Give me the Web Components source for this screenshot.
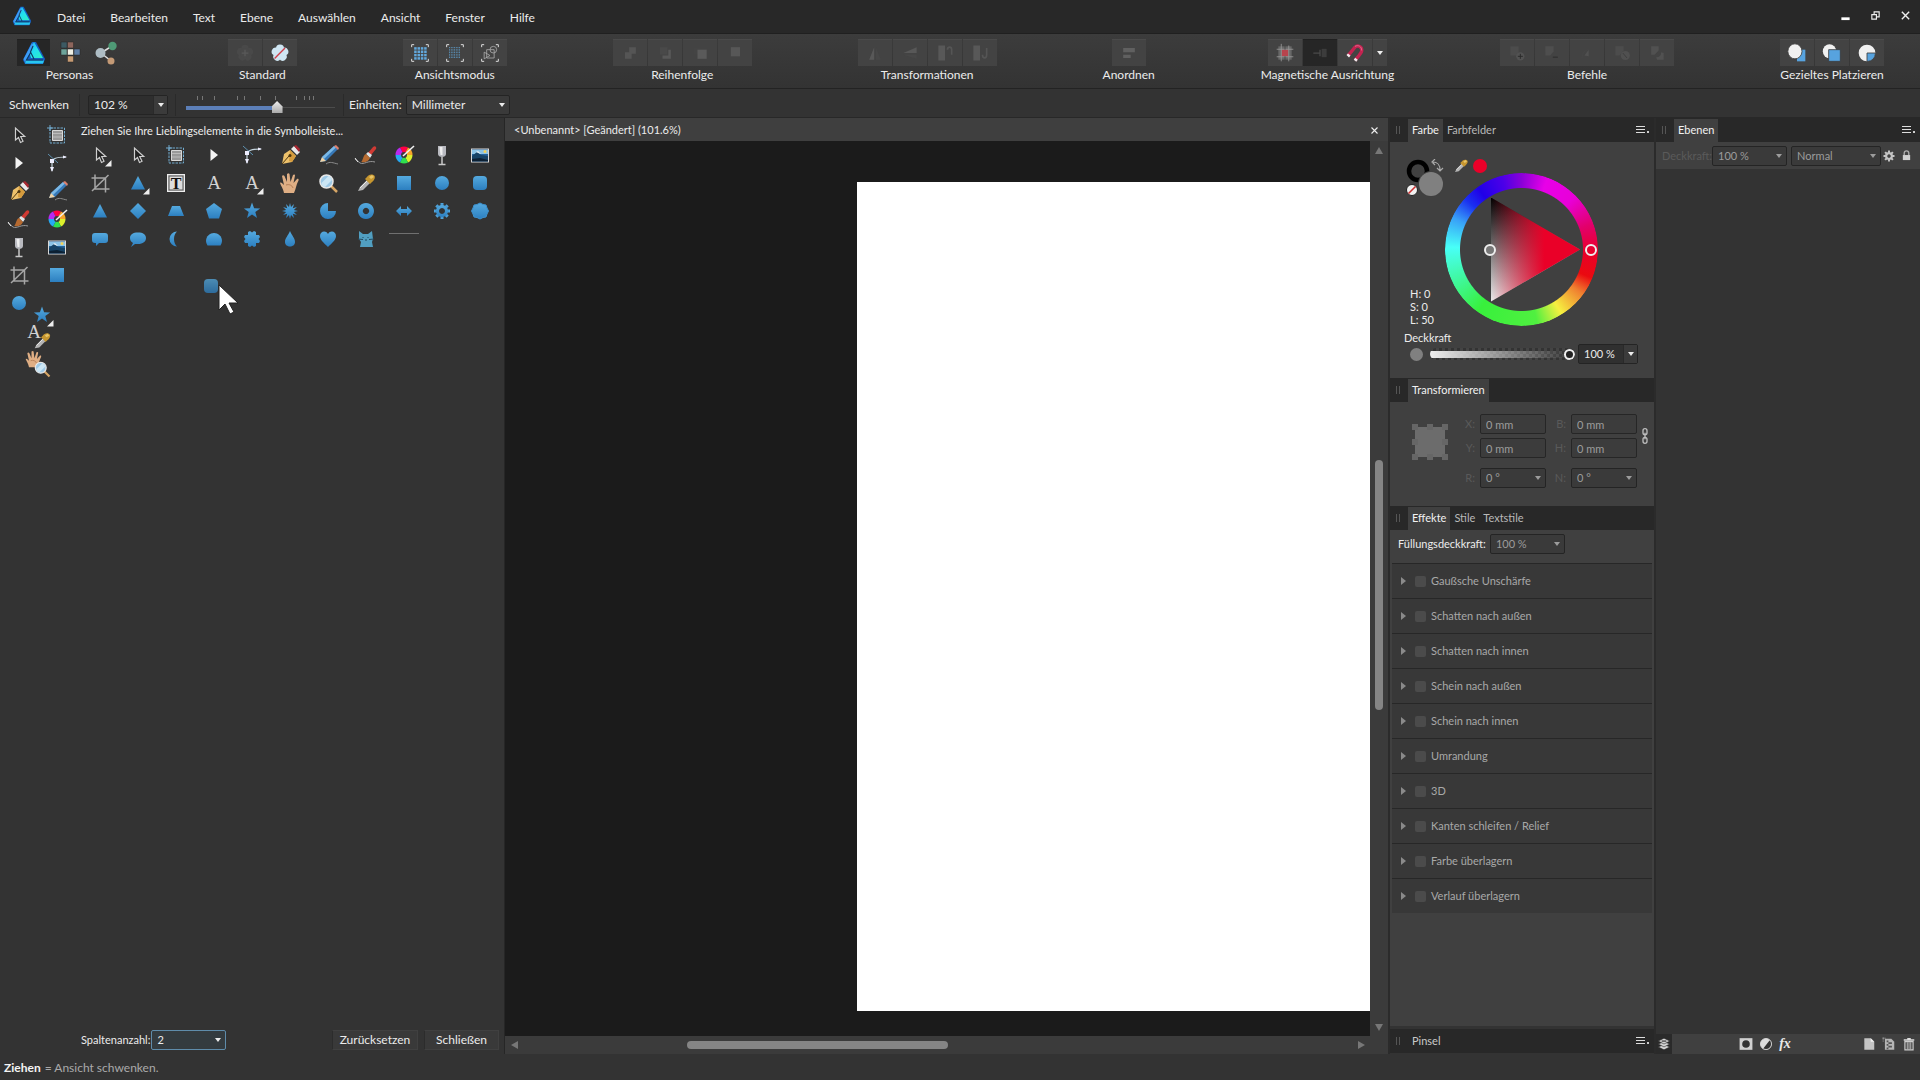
<!DOCTYPE html>
<html lang="de">
<head>
<meta charset="utf-8">
<title>&lt;Unbenannt&gt; [Geändert]</title>
<style>
  html, body { margin: 0; height: 100%; }
  body {
    background: #333;
    color: #ececec;
    font: 12px/16px Lato, "Noto Sans", sans-serif;
    overflow: hidden;
  }
</style>
</head>
<body>
<af-app></af-app>

<script>
const BLUE = `<defs><linearGradient id="b" x1="0" y1="0" x2="0" y2="1"><stop offset="0" stop-color="#55aadf"/><stop offset="1" stop-color="#2c7fc0"/></linearGradient></defs>`;
const blue = (shape) => `${BLUE}<g fill="url(#b)">${shape}</g>`;

// regular star: n points, outer and inner radius
function star(n, r1, r2) {
  const pts = [];
  for (let i = 0; i < n * 2; i++) {
    const r = i % 2 ? r2 : r1;
    const a = Math.PI * i / n - Math.PI / 2;
    pts.push((12 + r * Math.cos(a)).toFixed(1) + "," + (12 + r * Math.sin(a)).toFixed(1));
  }
  return `<polygon points="${pts.join(" ")}"/>`;
}

function around(n, shape) {
  let s = "";
  for (let i = 0; i < n; i++) s += `<g transform="rotate(${i * 360 / n} 12 12)">${shape}</g>`;
  return s;
}

const FLYOUT = `<path d="M23.500 17v6.500H17z" fill="#eee"/>`;
const LOGO = `<defs><linearGradient id="l" x1="0" y1="0" x2="1" y2="1"><stop offset="0" stop-color="#22b4f5"/><stop offset=".5" stop-color="#22e0ee"/><stop offset="1" stop-color="#2ff0c0"/></linearGradient></defs>
  <path d="M10 1h4l9 17-2 5H3l-2-4z" fill="#145fc4"/><path d="M12 1l9 16H9L7 10z" fill="url(#l)"/><path d="M10 2L1.500 18 3 21l9-16z" fill="#3c9cf6"/><path d="M3 22.500l1-3h18l-1 3z" fill="#28c7f0"/><path d="M9 11l-4.500 8H21M11 5L8.500 11l3.500 7" stroke="#10395c" stroke-width="1.100" fill="none"/>`;
const ARROW = `<path d="M8.500 5v12l3-2.500 2 5 2.500-1.200-2.300-4.800h4z" fill="#222" stroke="#cfcfcf" stroke-width="1.200"/>`;
const LETTER_T = `<rect x="3.500" y="3.500" width="17" height="17" fill="#c9c9c9" stroke="#eee"/><rect x="5" y="5" width="14" height="14" fill="#ddd" stroke="#555"/><text x="12" y="17.500" text-anchor="middle" font-family="Liberation Serif, serif" font-weight="bold" font-size="16" fill="#111">T</text>`;
const LETTER_A = `<text x="12" y="18" text-anchor="middle" font-family="Liberation Serif, serif" font-size="19" fill="#d2d2d2">A</text>`;
const CORNERS = `<path d="M2 5V2h3M19 2h3v3M22 19v3h-3M5 22H2v-3" fill="none" stroke="#ddd" stroke-width="1.200"/>`;

function dots(step, size) {
  let s = "";
  for (let y = 5; y < 19; y += step) for (let x = 5; x < 19; x += step) s += `<rect x="${x}" y="${y}" width="${size}" height="${size}"/>`;
  return `<g fill="#62a8dc">${s}</g>`;
}

const ICONS = {
  logo: LOGO,
  pixel: `<g stroke="#262626" stroke-width=".5"><path d="M3 1h6v6H3z" fill="#3d5a63"/><path d="M9.500 1h6v6h-6z" fill="#8c655c"/><path d="M3 8h6v6H3z" fill="#6da39a"/><path d="M9.500 8h6v6h-6z" fill="#efefe4"/><path d="M16 8h6v6h-6z" fill="#5f7fa5"/><path d="M9.500 15h6v6h-6z" fill="#c79b73"/></g>`,
  exporter: `<path d="M7 12L18 5M7 12l10 8" stroke="#ddd" stroke-width="1.500"/><circle cx="6.500" cy="12" r="5" fill="#aebdc5"/><circle cx="18.500" cy="5" r="4.200" fill="#4f9a76"/><circle cx="17" cy="20" r="3.500" fill="#c49a76"/>`,
  defaults: `<g fill="#494949">${around(5, `<circle cx="12" cy="6.500" r="4.500"/>`)}<circle cx="12" cy="12" r="6"/></g><path d="M12 8v8M8 12h8" stroke="#5a5a5a" stroke-width="1.500"/>`,
  revert: `<g fill="#cfe6f3">${around(5, `<circle cx="12" cy="6.500" r="4.800"/>`)}<circle cx="12" cy="12" r="6"/></g><path d="M5.500 18.500L18 6" stroke="#cf3d48" stroke-width="1.600"/>`,
  viewvector: CORNERS + dots(4, 3),
  viewpixel: CORNERS + dots(2, 1),
  viewoutline: CORNERS + `<path d="M8 8h9v10H8zM5 11l7 4-7 4z" fill="none" stroke="#aaa"/><circle cx="16" cy="8" r="4" fill="none" stroke="#aaa"/>`,
  order1: `<g fill="#555"><path d="M11 5h8v8h-8zM6 11h8v8H6z"/></g>`,
  order2: `<g><path d="M6 5h9v9H6z" fill="#494949"/><path d="M16 8h3v11H9v-4h7z" fill="#585858"/></g>`,
  order3: `<g><path d="M4 5h9v9H4z" fill="#444"/><path d="M9 8h11v11H9z" fill="#5a5a5a"/></g>`,
  order4: `<path d="M7 5h11v11H7z" fill="#575757"/>`,
  fliph: `<path d="M11 5v15H5z" fill="#585858"/><path d="M13 5v15h6z" fill="#474747"/>`,
  flipv: `<path d="M20 5v7H4z" fill="#585858"/><path d="M20 14v5L4 14z" fill="#474747"/>`,
  rotl: `<path d="M4 3h8v18H4z" fill="#585858"/><path d="M15 8c0-4 5-4 5 0v6" fill="none" stroke="#555" stroke-width="2"/>`,
  rotr: `<path d="M4 3h8v18H4z" fill="#585858"/><path d="M15 14c0 5 5 5 5 0V6" fill="none" stroke="#555" stroke-width="2"/>`,
  align: `<path d="M5 6h14v5H5zM5 14h9v4H5z" fill="#606060"/>`,
  grid: `<path d="M4 4h16v16H4z" fill="#686868"/><path d="M8 8h8v8H8z" fill="#b8434d"/><path d="M2 7.500h20M2 16.500h20M7.500 1v21M16.500 3v19" stroke="#999"/><path d="M12 3v5M12 16v5" stroke="#444"/>`,
  snapmove: `<path d="M4 12h8M12 8v8" stroke="#4a4a4a" stroke-width="1.500"/><path d="M14 7h6v10h-6z" fill="#3c3c3c"/>`,
  magnet: `<path d="M3.500 15.500L12 5c3-3 9-1 8 5-1 3-5 7-8 11" fill="none" stroke="#c32350" stroke-width="4"/><path d="M1.800 14.500l3 3 1.800-2.500-3-2.500zM10.500 20l3 2.500 1.800-2.500-3-2.200z" fill="#eee"/><path d="M12 4c4-2 8 0 8 5" stroke="#e5779a" fill="none"/>`,
  add: `<path d="M4 4h10v11H4z" fill="#4c4c4c"/><circle cx="16" cy="16" r="5" fill="#525252"/><path d="M16 13v6M13 16h6" stroke="#2b2b2b" stroke-width="1.200"/>`,
  sub: `<path d="M4 4h10v6l-4 5H4z" fill="#4e4e4e"/><path d="M13 17h6" stroke="#2b2b2b" stroke-width="1.200"/>`,
  inter: `<path d="M9 15l5-7v8z" fill="#515151"/><path d="M6 18c0-6 4-10 8-10" fill="none" stroke="#464646"/>`,
  divide: `<path d="M4 4h10v5l-5 6H4z" fill="#4c4c4c"/><circle cx="16" cy="15" r="5.500" fill="#505050"/><path d="M13 12l5 6" stroke="#3b3b3b"/>`,
  xor: `<path d="M5 4h9v5l-5 5H5zM20 12v8h-8l-1-3c4 0 6-2 6-6z" fill="#515151"/>`,
  place1: `<path d="M12 8h10v14H12z" fill="#57a3df"/><ellipse cx="9.500" cy="10" rx="8.500" ry="9" fill="#f0f0f0" stroke="#3c3c3c"/>`,
  place2: `<ellipse cx="9" cy="10" rx="8" ry="8.500" fill="#f0f0f0"/><path d="M8 8h14v14H8z" fill="#57a3df" stroke="#3c3c3c"/>`,
  place3: `<circle cx="12" cy="12" r="10" fill="#f0f0f0"/><path d="M12 12h10c0 6-4 10-10 10z" fill="#57a3df" stroke="#3c3c3c"/>`,

  move: ARROW,
  movefly: ARROW + FLYOUT,
  artboard: `<path d="M5 5h14.500v15H5z" fill="none" stroke="#72acd0" stroke-dasharray="2.500 1"/><path d="M7.500 7.500h10v10h-10z" fill="#999" stroke="#d8d8d8"/><path d="M8 10.500h9M8 14h9" stroke="#bbb"/><path d="M5 2v6M2 5h6" stroke="#72acd0"/>`,
  node: `<path d="M8.500 6v12l7.500-6z" fill="#f3f3f3"/>`,
  corner: `<path d="M7 20V12c0-4 3-6 14-6" fill="none" stroke="#c5d5de" stroke-width="1.200"/><path d="M3 3l10 9" stroke="#5d8fae"/><path d="M5 8h4v4H5zM18 4.500l4 1.500-4 1.500zM5 16h4l-2 5z" fill="#eef"/>`,
  pen: `<path d="M4 21L6 11l6-4 6 6-4 6z" fill="#edc16b"/><path d="M12 7l6 6-4 6-3-1z" fill="#d59b3d"/><path d="M4 21l7-8" stroke="#4b3510"/><circle cx="12" cy="12.500" r="1.500" fill="#4b3510"/><path d="M13 6l3-3 6 6-3 3z" fill="#e8e8e8"/><path d="M16 3l2-1 4 4-1 3z" fill="#a72630"/>`,
  pencil: `<path d="M4 19l2-5L18 3l4 3L10 18z" fill="#3779b8"/><path d="M6 14L18 3l2 1.500L8 16z" fill="#7ab8e6"/><path d="M18 3l2-1 3 3-1 2z" fill="#dd806c"/><path d="M4 19l2-5 4 4z" fill="#efd3a6"/><path d="M10 21c4-3 7-1 12 0" stroke="#8a8a8a" fill="none"/>`,
  brush: `<path d="M14 10l5-6c2-2 4 0 3 2l-5 6z" fill="#cf3a34"/><path d="M12 11l2-2 4 3-2 3z" fill="#dce3e6"/><path d="M7 19c2-1 2-7 5-8l4 4c-2 4-5 5-9 4z" fill="#b66a30"/><path d="M1 16l5 4c4 2 8-3 15-1" fill="none" stroke="#999"/><path d="M1 15l3 4" stroke="#eee"/>`,
  glass: `<path d="M8 3h8v8c0 4-8 4-8 0z" fill="#b9bac0"/><path d="M9.500 4h3v8h-2z" fill="#eee"/><path d="M12 14v7M8.500 21.500h7" stroke="#c8c8c8" stroke-width="1.500"/>`,
  image: `<rect x="3.500" y="6" width="17" height="13" fill="#23639b" stroke="#d8d8d8"/><path d="M4 7h16v4H4z" fill="#8cc4e6"/><circle cx="17" cy="8.500" r="1.500" fill="#f2d25a"/><path d="M4 13l5-4 4 3 7 1v5H4z" fill="#174365"/><path d="M4 16l8-1 8 2v1.500H4z" fill="#0c2033"/><path d="M8 9l2-1 3 3z" fill="#e7eef2"/>`,
  crop: `<path d="M7 3.500v14.500h14.500M3.500 7h14v14.500M4 20L20.500 4" fill="none" stroke="#a6a6a6" stroke-width="1.500"/>`,
  hand: `<path d="M6 22C5 17 3 15 2 12c1-1 2 0 4 2L4 5c1-1.500 2-.5 2.500 0L9 11 9 3c1-1 2-1 2.500 0l1 8 2.500-7c1-1 2-.5 2 .5L15.500 12l3.500-4c1-.5 2 0 1.500 1.500C18 14 18 18 16 22z" fill="#dfae84"/><path d="M8 14c3-1 6 0 7 3" stroke="#b57d56" fill="none"/>`,
  zoom: `<path d="M15 15l6 6" stroke="#d6a666" stroke-width="2.500"/><circle cx="10.500" cy="10.500" r="6.500" fill="#9dc9e6" stroke="#e8e8e8" stroke-width="1.500"/><path d="M5.500 12L12.500 5c2 1 3 2 3.500 4l-7 7C7 15.500 5.500 14 5.500 12z" fill="#cbe6f5"/>`,
  dropper: `<path d="M4 20l2-4 7-7 3 3-7 7z" fill="#b4b4b4"/><path d="M6 17l7-7" stroke="#eee"/><path d="M11 8l5 5 1.500-1.500C21 9 22 5 19.500 4c-3-1-5 0-7 2.500z" fill="#c6962f"/><path d="M15 6l3-2 2 2-3 2z" fill="#e7c467"/>`,
  rect: blue(`<path d="M5 5h14v14H5z"/>`),
  ellipse: blue(`<circle cx="12" cy="12" r="7"/>`),
  rounded: blue(`<rect x="5" y="5" width="14" height="14" rx="4"/>`),
  triangle: blue(`<path d="M12 5l7 13.500H5z"/>`),
  trianglefly: blue(`<path d="M12 5l7 13.500H5z"/>`) + FLYOUT,
  diamond: blue(`<path d="M12 4l8 8-8 8-8-8z"/>`),
  trapezoid: blue(`<path d="M8 7h8l4 10H4z"/>`),
  pentagon: blue(`<path d="M12 4l8 6-3 9.500H7L4 10z"/>`),
  star: blue(star(5, 8.5, 3.5)),
  starfly: blue(star(5, 8.5, 3.5)) + FLYOUT,
  burst: blue(star(12, 8, 4)),
  pie: blue(`<path d="M12 4a8 8 0 1 0 8 8h-8z"/>`),
  donut: blue(`<path fill-rule="evenodd" d="M12 4a8 8 0 1 1-.01 0zM12 8.800a3.200 3.200 0 1 0 .01 0z"/>`),
  darrow: blue(`<path d="M4 12l5-5v3h6V7l5 5-5 5v-3H9v3z"/>`),
  cog: blue(around(8, `<path d="M10.500 4h3v4h-3z"/>`) + `<path fill-rule="evenodd" d="M12 6a6 6 0 1 1-.01 0zM12 9a3 3 0 1 0 .01 0z"/>`),
  cloud: blue(`<path d="M12 4l3 1.500 3 .5 1 3 1.500 3-1.500 3-1 3-3 .5-3 1.500-3-1.500-3-.5-1-3L3.500 12 5 9l1-3 3-.5z" stroke="#3d91cd" stroke-width="1" stroke-linejoin="round"/>`),
  callout: blue(`<path d="M7 6h10a3 3 0 0 1 3 3v4a3 3 0 0 1-3 3h-6l-3 3v-3H7a3 3 0 0 1-3-3V9a3 3 0 0 1 3-3z"/>`),
  bubble: blue(`<path d="M12 5.500c5 0 8 2 8 5.500s-3 6-8 6l-3 0-4 3 2-4c-2-1-3-3-3-5 0-3.500 3-5.500 8-5.500z"/>`),
  moon: blue(`<path d="M13 4.500a7.500 7.500 0 0 0 0 15c-4-3-4-12 0-15z"/>`),
  segment: blue(`<path d="M5.500 18.500A8 8 0 0 1 4 14c0-5 4-8 8-8s8 3 8 8a8 8 0 0 1-1.500 4.500z"/>`),
  cross: blue(`<path d="M8 5l2-1 2 1.500L14 4l2 1v3h3l1 2-1.500 2 1.500 2-1 2h-3v3l-2 1-2-1.500-2 1.500-2-1v-3H5l-1-2 1.500-2L4 10l1-2h3z"/>`),
  drop: blue(`<path d="M12 4c2 5 5 7 5 11 0 6-10 6-10 0 0-4 3-6 5-11z"/>`),
  heart: blue(`<path d="M12 20C8 16 4 13 4 9c0-5 6-6 8-2 2-4 8-3 8 2 0 4-4 7-8 11z"/>`),
  cat: `<path d="M5 4l4 3h5l4-3 1 8-1 3 1 5H6l1-5-2-3z" fill="#519fc1"/><path d="M4 12l5 .500M20 12l-5 .500M9 10v1M14 10v1M11 13h2" stroke="#23495f"/>`,
  wheel: `<path d="M12 12L8 4.500A8.500 8.500 0 0 1 16 4.500z" fill="#f04"/><path d="M12 12l4-7.500a8.500 8.500 0 0 1 4.500 7.500z" fill="#f7a52a"/><path d="M12 12h8.500a8.500 8.500 0 0 1-4.500 7.500z" fill="#ddf02c"/><path d="M12 12l4 7.500a8.500 8.500 0 0 1-8 0z" fill="#2fe04e"/><path d="M12 12l-4 7.500A8.500 8.500 0 0 1 3.500 12z" fill="#26a9f3"/><path d="M12 12H3.500A8.500 8.500 0 0 1 8 4.500z" fill="#b82af0"/><circle cx="12" cy="12" r="3" fill="#3a3a3a"/><path d="M11 13L22 3" stroke="#f2f2f2" stroke-width="1.600"/>`,

  restore: `<path d="M4 10h10v10H4zM9 9V4h11v11h-5" fill="none" stroke="#eee" stroke-width="2.500"/>`,
  minimise: `<path d="M3 16h18v6H3z" fill="#fff"/>`,
  close: `<path d="M4 4l16 16M20 4L4 20" stroke="#eee" stroke-width="3"/>`,
  gear: `<g fill="#c4c4c4">${around(8, `<path d="M10 1h4v6h-4z"/>`)}<path fill-rule="evenodd" d="M12 4a8 8 0 1 1-.01 0zM12 8.500a3.500 3.500 0 1 0 .01 0z"/></g>`,
  lock: `<path d="M7 11V7a5 5 0 0 1 10 0v4" fill="none" stroke="#aaa" stroke-width="3"/><path d="M4 11h16v11H4z" fill="#cfcfcf"/>`,
  chain: `<g fill="none" stroke="#bdbdbd" stroke-width="2"><rect x="9" y="1" width="6" height="9" rx="3"/><rect x="9" y="14" width="6" height="9" rx="3"/><path d="M12 7v10"/></g>`,
  layers: `<g fill="#d5d5d5" stroke="#262626"><path d="M12 13l10 4-10 5-10-5z"/><path d="M12 8l10 4-10 5-10-5z"/><path d="M12 2l10 5-10 5L2 7z"/></g><path d="M8 7h8" stroke="#333" stroke-width="2"/>`,
  mask: `<path d="M1 2h22v20H1z" fill="#d0d0d0"/><circle cx="12" cy="12" r="6.500" fill="#333"/>`,
  adjust: `<circle cx="12" cy="12" r="9.500" fill="#ddd"/><path d="M18.700 5.300A9.500 9.500 0 0 1 7 20z" fill="#333"/><circle cx="12" cy="12" r="9.500" fill="none" stroke="#ddd" stroke-width="1.500"/>`,
  page: `<path d="M4 2h11l6 6v14H4z" fill="#c4c4c4"/><path d="M15 2v6h6z" fill="#f2f2f2"/>`,
  checker: `<path d="M5 3h11l5 5v14H5z" fill="#b5b5b5"/><path d="M8 6h3v3H8zM14 9h3v3h-3zM8 12h3v3H8zM14 15h3v3h-3zM11 9h3v3h-3zM11 15h3v3h-3zM8 18h3v3H8z" fill="#555"/><path d="M1 2h6M2 1v7" stroke="#ddd" stroke-dasharray="2 1"/>`,
  trash: `<path d="M3 5h18M9 3h6" stroke="#ddd" stroke-width="2.500"/><path d="M5 8h14v14H5z" fill="none" stroke="#ccc" stroke-width="2"/><path d="M9 9v12M12 9v12M15 9v12" stroke="#ccc" stroke-width="1.500"/>`,
  swatches: `<circle cx="12" cy="12" r="9" fill="none" stroke="#000" stroke-width="4.500"/><circle cx="25" cy="25" r="13" fill="#404040"/><circle cx="25" cy="25" r="12" fill="#808080"/><circle cx="6" cy="31" r="5.500" fill="#f2f2f2" stroke="#222"/><path d="M2.500 34.500l7-7" stroke="#c33" stroke-width="1.600"/><path d="M27 3c4 0 7 3 7 8M29 0l-3 3 3 3M31 9l3 3 3-3" fill="none" stroke="#aaa" stroke-width="1.200"/>`,
  anchor: `<path d="M3 3h30v30H3z" fill="#6c6c6c"/><path d="M0 0h6v6H0zM15 0h6v6h-6zM30 0h6v6h-6zM0 15h6v6H0zM30 15h6v6h-6zM0 30h6v6H0zM15 30h6v6h-6zM30 30h6v6h-6z" fill="#666"/>`,
  cursor: `<path d="M1 1v25l6-6 5 10 4-2-5-9h9z" fill="#fff" stroke="#222"/>`,
  T: LETTER_T,
  A: LETTER_A,
  AF: LETTER_A + FLYOUT
};

class AfIcon extends HTMLElement {
  constructor() {
    super();
    this.attachShadow({ mode: "open" });
  }

  connectedCallback() {
    const size = this.getAttribute("size") || 22;
    const box = this.getAttribute("box") || 24;
    this.shadowRoot.innerHTML = `
      <style>
        :host { display: block; line-height: 0; }
      </style>
      <svg width="${size}" height="${size}" viewBox="0 0 ${box} ${box}" aria-hidden="true">${ICONS[this.getAttribute("name")]}</svg>
    `;
  }
}

class AfSelect extends HTMLElement {
  constructor() {
    super();
    this.attachShadow({ mode: "open" });
  }

  connectedCallback() {
    const value = this.getAttribute("value");
    const disabled = this.hasAttribute("disabled") ? "disabled" : "";
    this.shadowRoot.innerHTML = `
      <style>
        :host { display: block; --w: 75px; }
        label { display: flex; align-items: center; gap: var(--gap, 4px); }
        .box { display: grid; width: var(--w); height: 20px; }
        select, i { grid-area: 1 / 1; }
        select {
          appearance: none;
          width: 100%;
          height: 20px;
          padding: 0 5px;
          border: 1px solid #242424;
          border-radius: 2px;
          background: var(--field, #3a3a3a);
          color: inherit;
          font: inherit;
          opacity: 1;
        }
        i {
          justify-self: end;
          align-self: center;
          margin-right: 5px;
          border: 3px solid transparent;
          border-top: 4px solid currentColor;
          border-bottom: 0;
          pointer-events: none;
        }
        :host([split]) i {
          margin: 0 1px 0 0;
          width: 14px;
          height: 18px;
          border: 0;
          border-left: 1px solid #2a2a2a;
          background: #3b3b3b;
          display: grid;
          place-items: center;
          box-sizing: border-box;
        }
        :host([split]) i::after {
          content: "";
          border: 3px solid transparent;
          border-top: 4px solid currentColor;
          border-bottom: 0;
        }
        :host([focused]) select { border-color: #5f8cab; background: #343b3f; }
        :host([disabled]) .box { color: #9c9c9c; }
        :host([disabled]) span { color: var(--label, #5a5a5a); }
      </style>
      <label><span>${this.getAttribute("label") || ""}</span>
        <div class="box"><select ${disabled} aria-label="${this.getAttribute("name") || value}"><option>${value}</option></select><i></i></div>
      </label>
    `;
  }
}

class AfTitlebar extends HTMLElement {
  constructor() {
    super();
    this.attachShadow({ mode: "open" });
  }

  connectedCallback() {
    const items = ["Datei", "Bearbeiten", "Text", "Ebene", "Auswählen", "Ansicht", "Fenster", "Hilfe"];
    this.shadowRoot.innerHTML = `
      <style>
        :host { display: flex; align-items: center; height: 33px; padding: 0 8px 0 12px; background: #282828; box-sizing: border-box; }
        af-icon { margin-bottom: 2px; }
        nav { display: flex; flex: 1; margin-left: 12px; padding-top: 2px; }
        nav button { border: 0; background: none; color: inherit; font: inherit; padding: 0 12px 0 13px; }
        .win { display: flex; gap: 17px; }
        .win button { display: grid; place-items: center; padding: 0; width: 13px; border: 0; background: none; }
      </style>
      <af-icon name="logo" size="20"></af-icon>
      <nav>${items.map((t) => `<button>${t}</button>`).join("")}</nav>
      <div class="win">
        <button aria-label="Minimieren"><af-icon name="minimise" size="11"></af-icon></button>
        <button aria-label="Verkleinern"><af-icon name="restore" size="11"></af-icon></button>
        <button aria-label="Beenden"><af-icon name="close" size="11"></af-icon></button>
      </div>
    `;
  }
}

class AfToolGroup extends HTMLElement {
  constructor() {
    super();
    this.attachShadow({ mode: "open" });
  }

  connectedCallback() {
    const icons = this.getAttribute("icons").split(" ");
    const active = this.getAttribute("active");
    const menu = this.hasAttribute("menu") ? `<button class="menu" aria-label="Optionen"><i></i></button>` : "";
    this.shadowRoot.innerHTML = `
      <style>
        :host { display: flex; flex-direction: column; align-items: center; gap: 1px; padding-top: 5px; }
        .row { display: flex; gap: 1px; }
        button {
          display: grid;
          place-items: center;
          width: 34px;
          height: 27px;
          padding: 0;
          border: 0;
          border-top: 1px solid #4a4a4a;
          background: #434343;
        }
        button.active { background: #262626; border-color: #202020; }
        :host([flat]) button { width: 33px; }
        :host([flat]) .row { gap: 3px; }
        :host([flat]) button:not(.active) { background: none; border-color: transparent; }
        .menu { width: 14px; }
        i { border: 3px solid transparent; border-top: 4px solid #eee; border-bottom: 0; }
      </style>
      <div class="row">${icons.map((n) => `<button class="${n === active ? "active" : ""}" aria-label="${n}"><af-icon name="${n}" size="${this.getAttribute("size") || 20}"></af-icon></button>`).join("")}${menu}</div>
      <span><slot></slot></span>
    `;
  }
}

class AfToolbar extends HTMLElement {
  constructor() {
    super();
    this.attachShadow({ mode: "open" });
  }

  connectedCallback() {
    this.shadowRoot.innerHTML = `
      <style>
        :host {
          display: flex;
          justify-content: space-between;
          height: 56px;
          padding: 0 36px 0 17px;
          box-sizing: border-box;
          background: linear-gradient(#3c3c3c, #333);
          border-top: 1px solid #202020;
          border-bottom: 1px solid #232323;
        }
      </style>
      <af-tool-group flat icons="logo pixel exporter" active="logo" size="24">Personas</af-tool-group>
      <af-tool-group icons="defaults revert">Standard</af-tool-group>
      <af-tool-group icons="viewvector viewpixel viewoutline">Ansichtsmodus</af-tool-group>
      <af-tool-group icons="order1 order2 order3 order4">Reihenfolge</af-tool-group>
      <af-tool-group icons="fliph flipv rotl rotr">Transformationen</af-tool-group>
      <af-tool-group icons="align">Anordnen</af-tool-group>
      <af-tool-group icons="grid snapmove magnet" active="snapmove" menu>Magnetische Ausrichtung</af-tool-group>
      <af-tool-group icons="add sub inter divide xor">Befehle</af-tool-group>
      <af-tool-group icons="place1 place2 place3">Gezieltes Platzieren</af-tool-group>
    `;
  }
}

class AfContextBar extends HTMLElement {
  constructor() {
    super();
    this.attachShadow({ mode: "open" });
  }

  connectedCallback() {
    const ticks = [11, 16, 28, 51, 58, 74, 89, 110, 118, 123, 127];
    this.shadowRoot.innerHTML = `
      <style>
        :host { display: flex; align-items: center; height: 29px; padding: 4px 0 0 9px; box-sizing: border-box; border-bottom: 1px solid #282828; }
        .name { width: 70px; }
        hr { width: 1px; height: 22px; margin: 0; border: 0; background: #2a2a2a; }
        .zoom { --gap: 0; --field: #2e2e2e; margin: 0 7px 0 8px; }
        .units { margin-left: 5px; }
        .slide { display: grid; margin: 0 8px 0 10px; }
        .slide svg { display: block; }
        input { appearance: none; width: 149px; height: 14px; margin: 0; background: linear-gradient(#5c7fb8, #5c7fb8) 0 6px / 60% 4px no-repeat, linear-gradient(#4c4c4c, #4c4c4c) 0 7px / 100% 1px no-repeat; }
        input::-webkit-slider-thumb { appearance: none; width: 11px; height: 12px; background: linear-gradient(#eee, #aaa); clip-path: polygon(50% 0, 100% 45%, 100% 100%, 0 100%, 0 45%); }
      </style>
      <span class="name">Schwenken</span>
      <hr>
      <af-select class="zoom" style="--w:80px" split value="102 %" name="Zoom"></af-select>
      <hr>
      <div class="slide">
        <svg width="149" height="4">${ticks.map((x) => `<path d="M${x + .5} 0v4" stroke="#777"/>`).join("")}</svg>
        <input type="range" min="0" max="100" value="62" aria-label="Zoomstufe">
      </div>
      <hr>
      <af-select class="units" style="--w:104px" label="Einheiten:" value="Millimeter" name="Einheiten"></af-select>
    `;
  }
}

class AfToolEditor extends HTMLElement {
  constructor() {
    super();
    this.attachShadow({ mode: "open" });
  }

  connectedCallback() {
    const docked = "move artboard node corner pen pencil brush wheel glass image crop rect ellipse".split(" ");
    const all = ("movefly move artboard node corner pen pencil brush wheel glass image " +
      "crop trianglefly T A AF hand zoom dropper rect ellipse rounded " +
      "triangle diamond trapezoid pentagon star burst pie donut darrow cog cloud " +
      "callout bubble moon segment cross drop heart cat").split(" ");
    const button = (n) => `<button aria-label="${n}"><af-icon name="${n}" size="24"></af-icon></button>`;
    this.shadowRoot.innerHTML = `
      <style>
        :host { display: grid; grid-template-columns: 81px 1fr; position: relative; border-right: 1px solid #262626; }
        button { font: inherit; color: inherit; padding: 0; border: 0; background: none; }
        .dock { display: grid; grid-template-columns: 38px 38px; grid-auto-rows: 28px; align-content: start; padding-top: 3px; }
        .dock button, .all button { display: grid; place-items: center; }
        .side { display: flex; flex-direction: column; font-size: 11px; }
        .hint { padding: 5px 0; }
        .all { display: grid; grid-template-columns: repeat(11, 38px); grid-auto-rows: 28px; flex: 1; align-content: start; margin-top: -3px; }
        .line { align-self: start; width: 30px; height: 1px; margin: 8px 0 0 4px; border: 0; background: #707070; }
        .foot { display: flex; align-items: center; gap: 6px; padding: 0 5px 4px 0; }
        .foot af-select { flex: 1; --gap: 1px; }
        .foot button { height: 20px; width: 86px; font-size: 12px; background: #393939; border: 1px solid #404040; border-left-color: #2c2c2c; }
        .foot button:last-child { width: 75px; }
        /* tools still moving to their new slot, and the one under the pointer */
        .float { position: absolute; }
      </style>
      <div class="dock">${docked.map(button).join("")}</div>
      <div class="side">
        <div class="hint">Ziehen Sie Ihre Lieblingselemente in die Symbolleiste...</div>
        <div class="all">${all.map(button).join("")}<hr class="line"></div>
        <div class="foot">
          <af-select focused label="Spaltenanzahl:" value="2" name="Spaltenanzahl"></af-select>
          <button>Zurücksetzen</button>
          <button>Schließen</button>
        </div>
      </div>
      <af-icon class="float" name="starfly" size="24" style="left:30px;top:185px"></af-icon>
      <af-icon class="float" name="A" size="24" style="left:22px;top:202px"></af-icon>
      <af-icon class="float" name="dropper" size="22" style="left:31px;top:212px"></af-icon>
      <af-icon class="float" name="hand" size="20" style="left:24px;top:231px"></af-icon>
      <af-icon class="float" name="zoom" size="20" style="left:32px;top:241px"></af-icon>
      <af-icon class="float" name="rounded" size="24" style="left:199px;top:156px;opacity:.75"></af-icon>
      <af-icon class="float" name="cursor" box="32" size="32" style="left:218px;top:166px"></af-icon>
    `;
  }
}

class AfDocument extends HTMLElement {
  constructor() {
    super();
    this.attachShadow({ mode: "open" });
  }

  connectedCallback() {
    this.shadowRoot.innerHTML = `
      <style>
        :host { display: grid; grid-template: 23px minmax(0, 1fr) 18px / minmax(0, 1fr) 18px; background: #3b3b3b; font-size: 11px; }
        .tab { grid-column: 1 / 3; display: flex; justify-content: space-between; align-items: center; padding: 1px 9px 0; background: #3f3f3f; }
        .tab button { padding: 0; border: 0; background: none; }
        .view { display: grid; grid-template-columns: 352fr 513fr; padding: 41px 0 25px; background: #1b1b1b; }
        .page { grid-column: 2; background: #fff; }
        .v { display: grid; grid-template-rows: 18px 301fr 250fr 308fr 18px; justify-items: center; align-items: center; }
        .h { display: grid; grid-template-columns: 18px 164fr 261fr 404fr 18px; align-items: center; justify-items: center; }
        .v b { grid-row: 3; width: 8px; height: 100%; border-radius: 4px; background: #858585; }
        .h b { grid-column: 3; height: 8px; width: 100%; border-radius: 4px; background: #858585; }
        i { border: 4px solid transparent; }
        .up { border-bottom: 7px solid #777; border-top: 0; }
        .down { grid-row: 5; border-top: 7px solid #777; border-bottom: 0; }
        .left { border-right: 7px solid #777; border-left: 0; }
        .right { grid-column: 5; border-left: 7px solid #777; border-right: 0; }
      </style>
      <div class="tab"><span>&lt;Unbenannt&gt; [Geändert] (101.6%)</span><button aria-label="Dokument schließen"><af-icon name="close" size="9"></af-icon></button></div>
      <div class="view"><div class="page"></div></div>
      <div class="v"><i class="up"></i><b></b><i class="down"></i></div>
      <div class="h"><i class="left"></i><b></b><i class="right"></i></div>
    `;
  }
}

class AfPanel extends HTMLElement {
  constructor() {
    super();
    this.attachShadow({ mode: "open" });
  }

  connectedCallback() {
    const tabs = this.getAttribute("tabs").split(",");
    const menu = this.hasAttribute("menu") ? `<button class="menu" aria-label="Menü"><u></u><s></s></button>` : "";
    this.shadowRoot.innerHTML = `
      <style>
        :host { display: flex; flex-direction: column; font-size: 11px; background: #404040; }
        .bar { display: flex; align-items: stretch; height: 24px; padding: 0 5px 0 6px; background: #282828; box-sizing: border-box; }
        .grip { width: 2px; height: 8px; margin: 8px 8px 0 0; border: 1px solid #555; border-width: 0 1px; }
        .tab { margin-top: 1px; padding: 0 4px 1px; border: 0; background: none; color: #b9b9b9; font: inherit; }
        .tab:first-of-type { background: #404040; color: #f2f2f2; }
        :host([collapsed]) .tab { background: none; color: #c8c8c8; }
        .menu { display: flex; align-items: flex-end; gap: 2px; align-self: center; margin-left: auto; padding: 0 0 2px; border: 0; background: none; }
        u { width: 9px; height: 1px; padding: 2px 0; border: 1px solid #ddd; border-width: 1px 0; background: linear-gradient(#ddd 0 0) center / 100% 1px no-repeat; }
        s { width: 2px; height: 2px; background: #ccc; }
      </style>
      <div class="bar"><span class="grip"></span>${tabs.map((t) => `<button class="tab">${t}</button>`).join("")}${menu}</div>
      <slot></slot>
    `;
  }
}

class AfColor extends HTMLElement {
  constructor() {
    super();
    this.attachShadow({ mode: "open" });
  }

  connectedCallback() {
    this.shadowRoot.innerHTML = `
      <style>
        :host { display: block; height: 236px; padding-top: 17px; box-sizing: border-box; }
        .top { display: grid; grid-template-columns: 55px 153px; }
        .left { display: flex; flex-direction: column; justify-content: space-between; line-height: 13px; }
        .left af-icon { margin-left: 16px; }
        .left div { padding-left: 20px; white-space: nowrap; }
        .pick { display: flex; align-items: center; gap: 3px; height: 14px; padding-left: 7px; }
        .red { width: 14px; height: 14px; border-radius: 7px; background: #ea0029; }
        .wheel { display: grid; height: 153px; align-items: center; }
        .ring, .tri, .dot { grid-area: 1 / 1; }
        .ring {
          height: 153px;
          border-radius: 50%;
          background: conic-gradient(#8a00d8, #e800e8 20deg, #e800d8 45deg, #e2006c 70deg, #e8002a 92deg, #ea0a10 112deg, #f08030 126deg, #f6f040 148deg, #50f040 168deg, #38f03c 215deg, #40f8a0 245deg, #48fff8 272deg, #38a0f8 295deg, #1a30f0 312deg, #2000e8 325deg, #4c00e8 345deg, #8a00d8);
          mask: radial-gradient(circle, transparent 61px, #000 62px);
        }
        .tri {
          width: 89px;
          height: 104px;
          margin-left: 46px;
          clip-path: polygon(0 0, 100% 50%, 0 100%);
          background: linear-gradient(90deg, #e8002800, #ea0028 60%), linear-gradient(#000, #eee);
        }
        .dot { z-index: 1; width: 8px; height: 8px; border: 2px solid #eee; border-radius: 50%; margin-left: 140px; }
        .dot.grey { margin-left: 39px; background: #777; }
        .label { display: block; margin: 6px 0 0 14px; line-height: 12px; }
        .op { display: flex; align-items: center; gap: 7px; padding-left: 20px; }
        .op span { width: 13px; height: 13px; border-radius: 7px; background: #808080; }
        input { appearance: none; width: 145px; height: 12px; margin: 0; background: linear-gradient(90deg, #eee, #3330 95%) 0 3px / 100% 7px no-repeat, repeating-conic-gradient(#444 0 25%, #333 0 50%) 0 3px / 6px 6px; clip-path: inset(0 round 6px); }
        input::-webkit-slider-thumb { appearance: none; width: 11px; height: 11px; box-sizing: border-box; border: 2px solid #eee; border-radius: 50%; background: #222; }
        .op af-select { margin-left: -7px; --field: #303030; --gap: 3px; }
      </style>
      <div class="top">
        <div class="left">
          <af-icon name="swatches" size="38" box="38"></af-icon>
          <div>H: 0<br>S: 0<br>L: 50</div>
        </div>
        <div>
          <div class="pick"><af-icon name="dropper" size="18"></af-icon><span class="red"></span></div>
          <div class="wheel"><div class="ring"></div><div class="tri"></div><div class="dot grey"></div><div class="dot"></div></div>
        </div>
      </div>
      <label class="label" for="alpha">Deckkraft</label>
      <div class="op"><span></span><input id="alpha" type="range" value="100"><af-select split style="--w:60px" value="100 %" name="Deckkraft"></af-select></div>
    `;
  }
}

class AfTransform extends HTMLElement {
  constructor() {
    super();
    this.attachShadow({ mode: "open" });
  }

  connectedCallback() {
    const field = (l) => `<label>${l}:<input value="0 mm" disabled></label>`;
    const angle = (l) => `<af-select class="angle" disabled style="--w:66px" label="${l}:" value="0 °" name="${l}"></af-select>`;
    this.shadowRoot.innerHTML = `
      <style>
        :host { display: flex; height: 104px; padding: 12px 1px 0 20px; box-sizing: border-box; }
        .anchor { margin: 10px 0 0 2px; }
        .fields { display: grid; grid-template-columns: 91px 91px; grid-template-rows: 20px 20px 20px; row-gap: 4px; justify-items: end; margin-left: 7px; }
        label { display: flex; align-items: center; gap: 5px; color: #5a5a5a; }
        input { width: 66px; height: 20px; box-sizing: border-box; padding: 0 5px; border: 1px solid #262626; border-radius: 2px; background: #3c3c3c; color: #9c9c9c; font: inherit; }
        .angle { --gap: 5px; margin-top: 6px; }
        .chain { margin: 14px 0 0 auto; }
      </style>
      <af-icon class="anchor" name="anchor" size="36" box="36"></af-icon>
      <div class="fields">${field("X")}${field("B")}${field("Y")}${field("H")}${angle("R")}${angle("N")}</div>
      <af-icon class="chain" name="chain" size="16"></af-icon>
    `;
  }
}

class AfEffects extends HTMLElement {
  constructor() {
    super();
    this.attachShadow({ mode: "open" });
  }

  connectedCallback() {
    const effects = ["Gaußsche Unschärfe", "Schatten nach außen", "Schatten nach innen", "Schein nach außen", "Schein nach innen",
      "Umrandung", "3D", "Kanten schleifen / Relief", "Farbe überlagern", "Verlauf überlagern"];
    this.shadowRoot.innerHTML = `
      <style>
        :host { display: block; flex: 1; }
        af-select { padding: 4px 8px 9px; --label: #ececec; }
        ul { margin: 0 2px; padding: 0; list-style: none; }
        li { display: flex; align-items: center; height: 35px; padding-left: 9px; box-sizing: border-box; border-top: 1px solid #272727; background: #383838; color: #a8a8a8; }
        i { border: 4px solid transparent; border-left: 5px solid #8a8a8a; border-right: 0; margin-right: 9px; }
        label { display: flex; align-items: center; gap: 5px; }
        input { appearance: none; width: 11px; height: 11px; margin: 0; border-radius: 2px; background: #4b4b4b; }
      </style>
      <af-select disabled label="Füllungsdeckkraft:" value="100 %" name="Füllungsdeckkraft"></af-select>
      <ul>${effects.map((e) => `<li><i></i><label><input type="checkbox" disabled>${e}</label></li>`).join("")}</ul>
    `;
  }
}

class AfLayers extends HTMLElement {
  constructor() {
    super();
    this.attachShadow({ mode: "open" });
  }

  connectedCallback() {
    const b = (n, s) => `<button class="${n}" aria-label="${n}"><af-icon name="${n}" size="${s || 14}"></af-icon></button>`;
    this.shadowRoot.innerHTML = `
      <style>
        :host { display: flex; flex-direction: column; flex: 1; background: #333; }
        .row { display: flex; align-items: center; height: 27px; padding: 0 8px 0 6px; background: #404040; }
        .row af-select { --gap: 0; }
        .row .mode { margin: 0 auto 0 4px; }
        .list { flex: 1; }
        .foot { display: flex; align-items: center; height: 20px; padding-right: 4px; gap: 6px; background: #404040; }
        button { padding: 0; border: 0; background: none; color: #e8e8e8; }
        .layers { padding: 3px 1px; background: #2a2a2a; margin-right: auto; }
        .fx { font: italic bold 14px/16px "Liberation Serif", serif; margin-right: auto; }
        .page { margin-left: 4px; }
        .gear { margin-right: 6px; }
      </style>
      <div class="row">
        <af-select disabled label="Deckkraft:" value="100 %" name="Deckkraft"></af-select>
        <af-select class="mode" disabled style="--w:90px" value="Normal" name="Mischmodus"></af-select>
        ${b("gear", 12)}${b("lock", 11)}
      </div>
      <div class="list"></div>
      <div class="foot">${b("layers")}${b("mask")}${b("adjust")}<button class="fx">fx</button>${b("page")}${b("checker")}${b("trash")}</div>
    `;
  }
}

class AfApp extends HTMLElement {
  constructor() {
    super();
    this.attachShadow({ mode: "open" });
  }

  connectedCallback() {
    this.shadowRoot.innerHTML = `
      <style>
        :host { display: grid; grid-template-rows: auto auto auto minmax(0, 1fr) 26px; height: 100vh; }
        main { display: grid; grid-template-columns: 505px minmax(0, 1fr) 266px 266px; min-height: 0; }
        aside { display: flex; flex-direction: column; border-left: 2px solid #2b2b2b; min-height: 0; }
        .grow { flex: 1; }
        .effects { margin-bottom: 3px; }
        .brushes { margin-bottom: 1px; }
        footer { display: flex; align-items: center; gap: 4px; padding: 1px 0 0 4px; color: #aaa; }
        footer b { color: #f4f4f4; }
      </style>
      <af-titlebar></af-titlebar>
      <af-toolbar></af-toolbar>
      <af-context-bar></af-context-bar>
      <main>
        <af-tool-editor></af-tool-editor>
        <af-document></af-document>
        <aside>
          <af-panel tabs="Farbe,Farbfelder" menu><af-color></af-color></af-panel>
          <af-panel tabs="Transformieren"><af-transform></af-transform></af-panel>
          <af-panel class="grow effects" tabs="Effekte,Stile,Textstile"><af-effects></af-effects></af-panel>
          <af-panel class="brushes" tabs="Pinsel" collapsed menu></af-panel>
        </aside>
        <aside>
          <af-panel class="grow" tabs="Ebenen" menu><af-layers></af-layers></af-panel>
        </aside>
      </main>
      <footer><b>Ziehen</b><span>= Ansicht schwenken.</span></footer>
    `;
  }
}

customElements.define("af-icon", AfIcon);
customElements.define("af-select", AfSelect);
customElements.define("af-titlebar", AfTitlebar);
customElements.define("af-tool-group", AfToolGroup);
customElements.define("af-toolbar", AfToolbar);
customElements.define("af-context-bar", AfContextBar);
customElements.define("af-tool-editor", AfToolEditor);
customElements.define("af-document", AfDocument);
customElements.define("af-panel", AfPanel);
customElements.define("af-color", AfColor);
customElements.define("af-transform", AfTransform);
customElements.define("af-effects", AfEffects);
customElements.define("af-layers", AfLayers);
customElements.define("af-app", AfApp);
</script>
</body>
</html>
